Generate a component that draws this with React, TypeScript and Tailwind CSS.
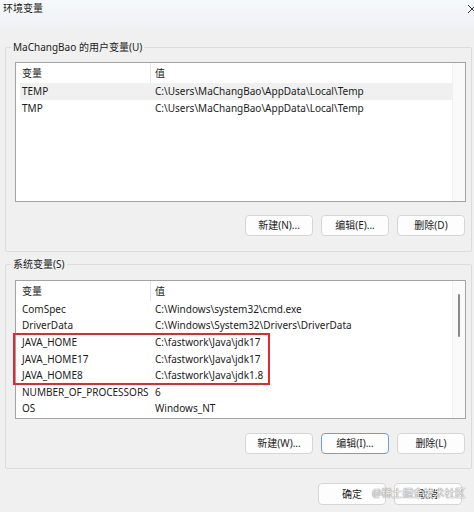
import React from "react";

const userVars = [
  { name: "TEMP", value: "C:\\Users\\MaChangBao\\AppData\\Local\\Temp", selected: true },
  { name: "TMP", value: "C:\\Users\\MaChangBao\\AppData\\Local\\Temp" },
];

const sysVars = [
  { name: "ComSpec", value: "C:\\Windows\\system32\\cmd.exe" },
  { name: "DriverData", value: "C:\\Windows\\System32\\Drivers\\DriverData" },
  { name: "JAVA_HOME", value: "C:\\fastwork\\Java\\jdk17" },
  { name: "JAVA_HOME17", value: "C:\\fastwork\\Java\\jdk17" },
  { name: "JAVA_HOME8", value: "C:\\fastwork\\Java\\jdk1.8" },
  { name: "NUMBER_OF_PROCESSORS", value: "6" },
  { name: "OS", value: "Windows_NT" },
];

type Row = { name: string; value: string; selected?: boolean };

function Button({ label, focused, tall }: { label: string; focused?: boolean; tall?: boolean }) {
  return (
    <button
      className={
        "w-[68px] rounded-[4px] border bg-[#fdfdfd] text-[10px] text-[#1b1b1b] " +
        (tall ? "h-[22px] " : "h-[21px] ") +
        (focused ? "border-[#6f9fcf]" : "border-[#d6d6d6]")
      }
    >
      {label}
    </button>
  );
}

function VarList({
  rows,
  rowH,
  height,
  scroll,
  children,
}: {
  rows: Row[];
  rowH: string;
  height: string;
  scroll?: boolean;
  children?: React.ReactNode;
}) {
  return (
    <div className={"relative ml-[9px] w-[451px] border border-[#a3a3a3] bg-white " + height}>
      <div className="flex h-full">
        <div className="flex-1 pl-[4px]">
          {/* header */}
          <div className="flex h-[20px] items-center">
            <div className="w-[130px] pl-[2px]">变量</div>
            <div className="h-full border-l border-[#e5e5e5] pl-[4px] leading-[20px]">值</div>
          </div>
          {rows.map((r) => (
            <div
              key={r.name}
              className={"flex items-center " + rowH + (r.selected ? " bg-[#f0f0f0]" : "")}
            >
              <div className="w-[131px] whitespace-nowrap pl-[2px]">{r.name}</div>
              <div className="whitespace-nowrap pl-[4px]">{r.value}</div>
            </div>
          ))}
        </div>
        <div className="relative w-[13px] border-l border-[#f0f0f0] bg-[#fafafa]">
          {scroll && (
            <div className="absolute left-[5px] top-[13px] h-[43px] w-[2px] rounded-full bg-[#8a8a8a]" />
          )}
        </div>
      </div>
      {children}
    </div>
  );
}

function Group({ label, children }: { label: string; children: React.ReactNode }) {
  return (
    <div className="ml-[5px] h-[205px] w-[467px] rounded-[2px] border border-[#dcdcdc]">
      <div className="-mt-[8px] ml-[5px] h-[15px] w-fit bg-[#f0f0f0] px-[2px] leading-[15px]">
        {label}
      </div>
      {children}
    </div>
  );
}

export default function App() {
  return (
    <div
      className="relative h-[512px] w-[474px] overflow-hidden bg-[#f0f0f0] text-[10px] text-[#1b1b1b]"
      style={{ fontFamily: '"Noto Sans", "Noto Sans CJK SC", sans-serif' }}
    >
      {/* title bar */}
      <div className="relative h-[30px] bg-gradient-to-b from-[#f6f9fc] to-[#eff1f3]">
        <div className="absolute left-[3px] top-[1px]">环境变量</div>
        <svg className="absolute left-[467px] top-[4px]" width="10" height="10" viewBox="0 0 10 10">
          <path d="M1 1 L9 9 M9 1 L1 9" stroke="#333" strokeWidth="1" />
        </svg>
      </div>

      {/* user variables */}
      <div className="mt-[17px]">
        <Group label="MaChangBao 的用户变量(U)">
          <div className="mt-[7px]">
            <VarList rows={userVars} rowH="h-[17px]" height="h-[140px]" />
          </div>
          <div className="mt-[13px] flex justify-end gap-[8px] pr-[6px]">
            <Button label="新建(N)..." />
            <Button label="编辑(E)..." />
            <Button label="删除(D)" />
          </div>
        </Group>
      </div>

      {/* system variables */}
      <div className="mt-[12px]">
        <Group label="系统变量(S)">
          <div className="mt-[8px]">
            <VarList rows={sysVars} rowH="h-[16.6px]" height="h-[139px]" scroll>
              <div className="pointer-events-none absolute left-[-3px] top-[52px] h-[52px] w-[257px] border-2 border-[#e5282f]" />
            </VarList>
          </div>
          <div className="mt-[14px] flex justify-end gap-[8px] pr-[6px]">
            <Button label="新建(W)..." />
            <Button label="编辑(I)..." focused />
            <Button label="删除(L)" />
          </div>
        </Group>
      </div>

      {/* dialog buttons */}
      <div className="mt-[14px] flex justify-end gap-[8px] pr-[12px]">
        <Button label="确定" tall />
        <Button label="取消" tall />
      </div>

      {/* watermark */}
      <div
        className="pointer-events-none absolute left-[372px] top-[486px] whitespace-nowrap text-[10.5px] text-white/90"
        style={{ textShadow: "0 0 1px #777, 0 0 1px #777" }}
      >
        @稀土掘金技术社区
      </div>
    </div>
  );
}
